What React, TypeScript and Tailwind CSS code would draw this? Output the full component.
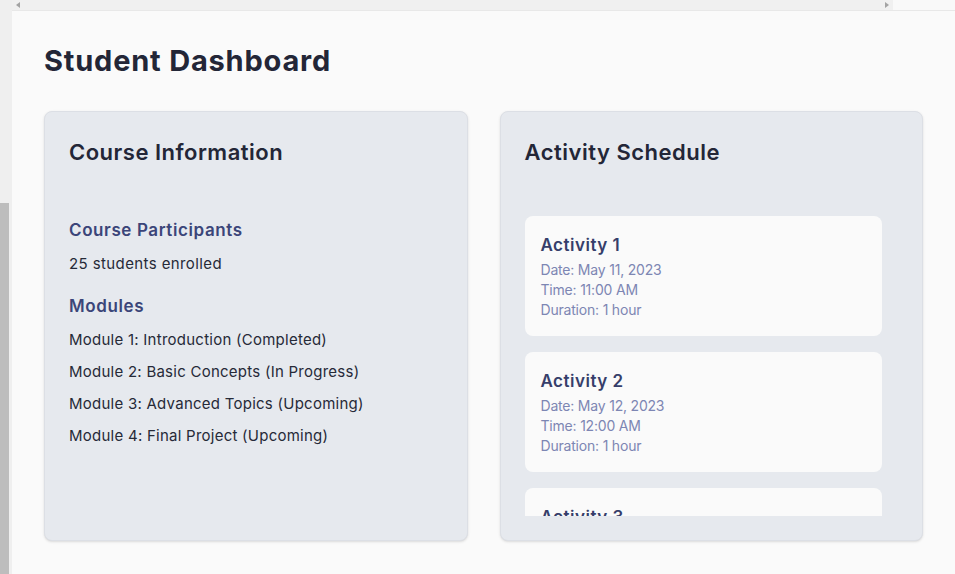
import React from 'react';

interface Activity {
    id: number;
    name: string;
    date: string;
    time: string;
    duration: string;
}

const modules = [
    'Module 1: Introduction (Completed)',
    'Module 2: Basic Concepts (In Progress)',
    'Module 3: Advanced Topics (Upcoming)',
    'Module 4: Final Project (Upcoming)',
];

const activities: Activity[] = [
    { id: 1, name: 'Activity 1', date: 'May 11, 2023', time: '11:00 AM', duration: '1 hour' },
    { id: 2, name: 'Activity 2', date: 'May 12, 2023', time: '12:00 AM', duration: '1 hour' },
    { id: 3, name: 'Activity 3', date: 'May 13, 2023', time: '01:00 PM', duration: '1 hour' },
];

// Course info card
const CourseInfo: React.FC = () => (
    <div className="flex-1 bg-[#e6e9ee] border border-[#dcdfe5] rounded-lg shadow-sm p-6">
        <h2 className="text-[22px] leading-8 font-semibold text-[#232637] tracking-[0.5px] mb-12">Course Information</h2>
        <h3 className="text-[17px] leading-7 font-semibold text-[#3b4579] tracking-[0.6px]">Course Participants</h3>
        <p className="text-[15px] leading-6 text-[#262a38] tracking-[0.4px] mt-2">25 students enrolled</p>
        <h3 className="text-[17px] leading-7 font-semibold text-[#3b4579] tracking-[0.6px] mt-4">Modules</h3>
        <ul className="mt-1">
            {modules.map(m => (
                <li key={m} className="text-[15px] leading-8 text-[#262a38] tracking-[0.25px]">{m}</li>
            ))}
        </ul>
    </div>
);

// Activity schedule card
const ActivitySchedule: React.FC = () => (
    <div className="flex-1 bg-[#e6e9ee] border border-[#dcdfe5] rounded-lg shadow-sm p-6">
        <h2 className="text-[22px] leading-8 font-semibold text-[#232637] tracking-[0.5px] mb-12">Activity Schedule</h2>
        <div className="h-[300px] overflow-hidden pr-4 space-y-4">
            {activities.map(a => (
                <div key={a.id} className="bg-[#fafafa] rounded-lg px-4 pt-[14px] pb-4">
                    <h4 className="text-[17px] leading-[30px] font-semibold text-[#363e6a] tracking-[0.5px]">{a.name}</h4>
                    <p className="text-[14px] leading-5 text-[#7d86b3] tracking-[-0.2px]">Date: {a.date}</p>
                    <p className="text-[14px] leading-5 text-[#7d86b3] tracking-[-0.2px]">Time: {a.time}</p>
                    <p className="text-[14px] leading-5 text-[#7d86b3] tracking-[-0.2px]">Duration: {a.duration}</p>
                </div>
            ))}
        </div>
    </div>
);

export default function App() {
    return (
        <div className="w-[955px] h-[574px] flex bg-[#fafafa] overflow-hidden" style={{ fontFamily: 'Inter, "Noto Sans", sans-serif' }}>
            {/* left scrollbar */}
            <div className="w-[12px] h-full bg-[#efefef] flex flex-col">
                <div className="h-[203px]" />
                <div className="w-[9px] flex-1 bg-[#bdbdbd]" />
            </div>

            <div className="flex-1 flex flex-col">
                {/* top scrollbar */}
                <div className="h-[11px] flex border-b border-[#e8e8e8]">
                    <div className="w-[881px] bg-[#f0f0f0] flex items-center justify-between px-[4px]">
                        <span className="w-0 h-0 border-y-[3px] border-y-transparent border-r-[4px] border-r-[#a3a3a3]" />
                        <span className="w-0 h-0 border-y-[3px] border-y-transparent border-l-[4px] border-l-[#a3a3a3]" />
                    </div>
                    <div className="flex-1 bg-[#f9f9f9]" />
                </div>

                <div className="px-8 pt-[32px]">
                    <h1 className="text-[29px] leading-9 font-bold text-[#232637] tracking-[0.8px] mb-8">Student Dashboard</h1>
                    <div className="flex gap-8 h-[430px]">
                        <CourseInfo />
                        <ActivitySchedule />
                    </div>
                </div>
            </div>
        </div>
    );
}
